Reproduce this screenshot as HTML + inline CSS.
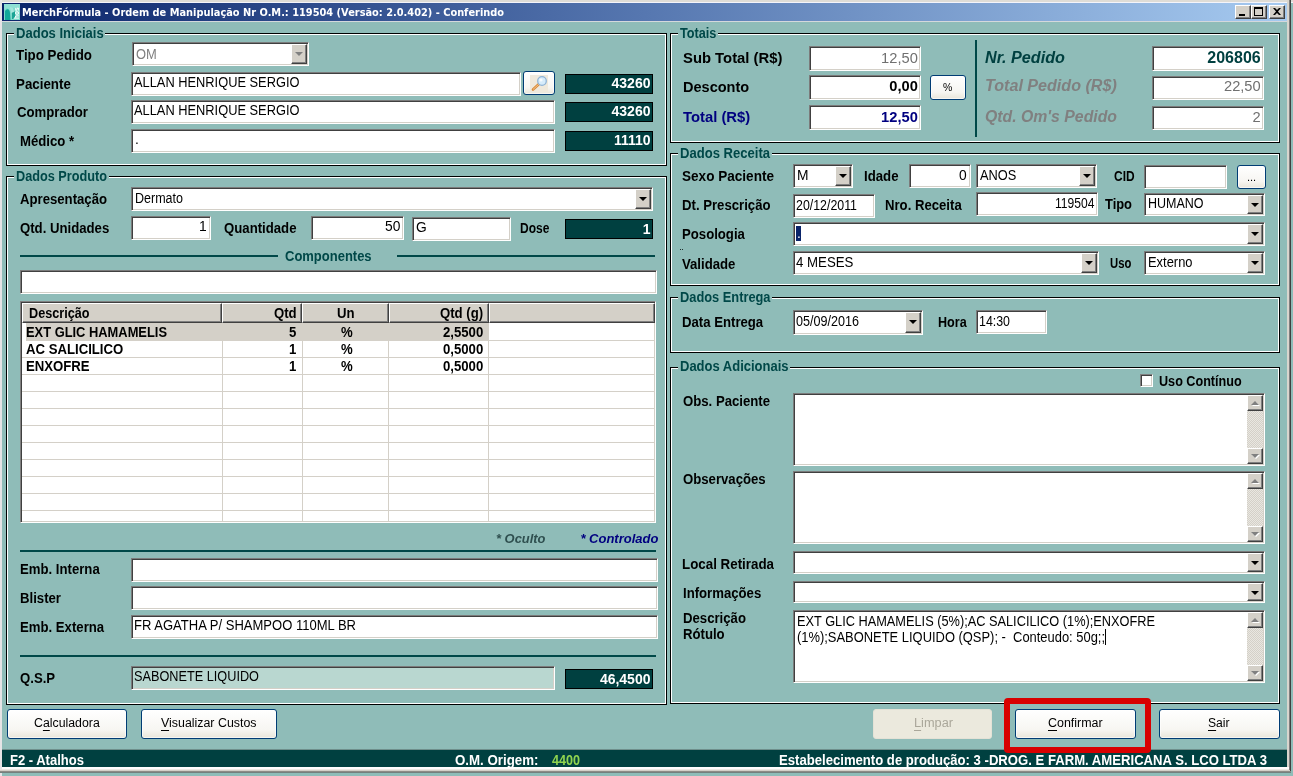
<!DOCTYPE html>
<html><head><meta charset="utf-8"><title>MerchFórmula - Ordem de Manipulação</title><style>
*{box-sizing:border-box;margin:0;padding:0}
html,body{width:1293px;height:776px;overflow:hidden;background:#8fbcb8;font-family:"Liberation Sans",sans-serif;}
body{position:relative}
#w{position:absolute;left:0;top:0;width:1293px;height:776px;will-change:transform;overflow:hidden}
.a{position:absolute}
.t{position:absolute;white-space:nowrap;transform-origin:0 0;line-height:16px;height:16px}
.b{font-weight:bold;font-size:14px;color:#000}
.r{font-size:13px;color:#000}
.fld{position:absolute;background:#fff;border:1px solid;border-color:#7b7b7b #fff #fff #7b7b7b;box-shadow:inset 1px 1px 0 #404040,inset -1px -1px 0 #d4d0c8}
.dd{position:absolute;top:1px;right:1px;bottom:1px;width:16px;background:#d4d0c8;border:1px solid;border-color:#fff #404040 #404040 #fff;box-shadow:inset -1px -1px 0 #808080}
.dd:after{content:"";position:absolute;left:3px;top:7px;border:4px solid transparent;border-top-color:#000;border-bottom:0;border-left-width:4px;border-right-width:4px}
.dd.dis:after{border-top-color:#808080}
.gb{position:absolute;border:1px solid #000;box-shadow:inset 0 0 0 1px #fff}
.lg{position:absolute;background:#8fbcb8;height:14px}
.dk{position:absolute;background:#004040;border:1px solid #000}
.hl{position:absolute;height:2px;background:#004848}
.xb{position:absolute;border:1px solid #003c74;border-radius:3px;background:linear-gradient(#ffffff 0%,#f7f6f2 70%,#e9e6da 100%);box-shadow:inset 0 0 0 1px rgba(255,255,255,.6)}
.xb.dis{border-color:#e4e2d6;background:#ebe9dd;box-shadow:none}
.sb{position:absolute;top:1px;right:1px;bottom:1px;width:16px;background-color:#e9e7e1;background-image:linear-gradient(45deg,#d4d0c8 25%,transparent 25%,transparent 75%,#d4d0c8 75%),linear-gradient(45deg,#d4d0c8 25%,transparent 25%,transparent 75%,#d4d0c8 75%);background-size:2px 2px;background-position:0 0,1px 1px}
.sbb{position:absolute;left:0;width:16px;height:16px;background:#d4d0c8;border:1px solid;border-color:#fff #404040 #404040 #fff;box-shadow:inset -1px -1px 0 #808080}
.sbb:after{content:"";position:absolute;left:3px;top:5px;border:4px solid transparent;filter:drop-shadow(1px 1px 0 #fff)}
.sbb.up:after{border-bottom:4px solid #808080;border-top:0}
.sbb.dn:after{border-top:4px solid #808080;border-bottom:0}
u{text-decoration:underline;text-underline-offset:3px;text-decoration-thickness:1px}
</style></head><body>
<div id="w">
<div class="a" style="left:0;top:0;width:1293px;height:3px;background:#dedcd6"></div>
<div class="a" style="left:0;top:2px;width:1293px;height:1px;background:#f4f4fa"></div>
<div class="a" style="left:0;top:0;width:2px;height:776px;background:#e6e4e6"></div>
<div class="a" style="left:2px;top:3px;width:1285px;height:18px;background:linear-gradient(90deg,#0a246a 0%,#5677b0 50%,#a6caf0 100%)"></div>
<div class="a" style="left:2px;top:21px;width:1285px;height:1px;background:#d4d8dc"></div>
<svg class="a" style="left:4px;top:4px" width="16" height="16" viewBox="0 0 16 16"><rect width="16" height="16" fill="#7fd9cb"/><path d="M0 0h16v5L9 4 6 6 3 4 0 6z" fill="#8fe0d4"/><path d="M1 7c2-3 5-2 5 2l.5 7H1z" fill="#12a89a"/><path d="M8 8l3-.5.5 4.500L9 15H8z" fill="#1aa394"/><path d="M6 3l3 1 1 4-3 1z" fill="#a5e6dc"/><text x="-15" y="15" transform="rotate(-90)" font-family="Liberation Sans,sans-serif" font-size="6.5" font-weight="bold" fill="#fff">hos</text></svg>
<span class="t" style="left:21.80px;top:5.09px;font-size:11px;transform:scaleX(0.8923);font-family:'DejaVu Sans','Liberation Sans',sans-serif;font-weight:bold;color:#fff">MerchFórmula - Ordem de Manipulação Nr O.M.: 119504 (Versão: 2.0.402) - Conferindo</span>
<div class="a" style="left:1235px;top:5px;width:16px;height:14px;background:#d4d0c8;border:1px solid;border-color:#fff #404040 #404040 #fff;box-shadow:inset -1px -1px 0 #808080"><div class="a" style="left:3px;top:8px;width:6px;height:2px;background:#000"></div></div>
<div class="a" style="left:1251px;top:5px;width:16px;height:14px;background:#d4d0c8;border:1px solid;border-color:#fff #404040 #404040 #fff;box-shadow:inset -1px -1px 0 #808080"><div class="a" style="left:2px;top:1px;width:9px;height:9px;border:1px solid #000;border-top-width:2px"></div></div>
<div class="a" style="left:1269px;top:5px;width:16px;height:14px;background:#d4d0c8;border:1px solid;border-color:#fff #404040 #404040 #fff;box-shadow:inset -1px -1px 0 #808080"><svg class="a" style="left:3px;top:2px" width="8" height="7" viewBox="0 0 8 7"><path d="M0 0h2l2 2 2-2h2L5 3.500 8 7H6L4 5 2 7H0l3-3.500z" fill="#000"/></svg></div>
<div class="a" style="left:1287px;top:0;width:2px;height:773px;background:#d8d5ce"></div>
<div class="a" style="left:1289px;top:0;width:1px;height:773px;background:#808080"></div>
<div class="a" style="left:1290px;top:0;width:1px;height:773px;background:#404040"></div>
<div class="a" style="left:2px;top:749px;width:1285px;height:1px;background:#6f8f8c"></div>
<div class="a" style="left:2px;top:750px;width:1285px;height:17px;background:#004040"></div>
<div class="a" style="left:2px;top:767px;width:1287px;height:2px;background:#fdfdfd"></div><div class="a" style="left:2px;top:769px;width:1287px;height:1px;background:#ebe9e4"></div>
<div class="a" style="left:0;top:770px;width:1290px;height:1px;background:#d4d0c8"></div><div class="a" style="left:0;top:771px;width:1291px;height:1px;background:#8d8b86"></div>
<div class="a" style="left:0;top:772px;width:1291px;height:1px;background:#74807e"></div>
<div class="gb" style="left:6px;top:33px;width:661px;height:133px;"></div>
<div class="lg" style="left:13.8px;top:27px;width:91.7px;height:14px;"></div>
<span class="t b" style="left:15.80px;top:24.75px;font-size:14px;transform:scaleX(0.9314);color:#004848">Dados Iniciais</span>
<div class="gb" style="left:6px;top:176px;width:661px;height:529px;"></div>
<div class="lg" style="left:14px;top:170px;width:95px;height:14px;"></div>
<span class="t b" style="left:16.00px;top:167.95px;font-size:14px;transform:scaleX(0.9069);color:#004848">Dados Produto</span>
<div class="gb" style="left:670px;top:33px;width:609.5px;height:110px;"></div>
<div class="lg" style="left:677.6px;top:27px;width:40.39999999999998px;height:14px;"></div>
<span class="t b" style="left:679.60px;top:24.75px;font-size:14px;transform:scaleX(0.9054);color:#004848">Totais</span>
<div class="gb" style="left:670px;top:153px;width:609.5px;height:133px;"></div>
<div class="lg" style="left:677.5px;top:147px;width:94.0px;height:14px;"></div>
<span class="t b" style="left:679.50px;top:144.85px;font-size:14px;transform:scaleX(0.9328);color:#004848">Dados Receita</span>
<div class="gb" style="left:670px;top:297px;width:609.5px;height:56px;"></div>
<div class="lg" style="left:677.5px;top:291px;width:94.5px;height:14px;"></div>
<span class="t b" style="left:679.50px;top:288.95px;font-size:14px;transform:scaleX(0.9159);color:#004848">Dados Entrega</span>
<div class="gb" style="left:670px;top:366.5px;width:609.5px;height:337.5px;"></div>
<div class="lg" style="left:677.5px;top:360.5px;width:112.5px;height:14.0px;"></div>
<span class="t b" style="left:679.50px;top:358.25px;font-size:14px;transform:scaleX(0.9277);color:#004848">Dados Adicionais</span>
<span class="t b" style="left:16.20px;top:46.65px;font-size:14px;transform:scaleX(0.9517);">Tipo Pedido</span>
<span class="t b" style="left:16.20px;top:76.15px;font-size:14px;transform:scaleX(0.9515);">Paciente</span>
<span class="t b" style="left:16.70px;top:104.15px;font-size:14px;transform:scaleX(0.9400);">Comprador</span>
<span class="t b" style="left:19.50px;top:133.15px;font-size:14px;transform:scaleX(0.9400);">Médico *</span>
<div class="fld" style="left:132px;top:42px;width:177px;height:24px;"><div class="dd dis"></div></div>
<span class="t r" style="left:135.60px;top:45.85px;font-size:14px;transform:scaleX(0.9219);color:#808080">OM</span>
<div class="fld" style="left:131px;top:72px;width:390px;height:24px;"></div>
<span class="t r" style="left:134.00px;top:74.25px;font-size:14px;transform:scaleX(0.9169);">ALLAN HENRIQUE SERGIO</span>
<div class="fld" style="left:131px;top:100px;width:424px;height:24px;"></div>
<span class="t r" style="left:134.00px;top:102.25px;font-size:14px;transform:scaleX(0.9169);">ALLAN HENRIQUE SERGIO</span>
<div class="fld" style="left:131px;top:129px;width:424px;height:24px;"></div>
<span class="t r" style="left:135.00px;top:131.45px;font-size:14px;transform:scaleX(0.9850);">.</span>
<div class="xb" style="left:523px;top:71px;width:32px;height:24px;"><svg class="a" style="left:6px;top:3px" width="20" height="17" viewBox="0 0 20 17"><rect x="0" y="0" width="18" height="17" fill="#efe9dc"/><path d="M3 14.500L9.500 8.500" stroke="#d98a3a" stroke-width="2.600" stroke-linecap="round"/><path d="M3.300 14.200L9 9" stroke="#f4c58a" stroke-width="1" stroke-linecap="round"/><circle cx="12" cy="6" r="4.300" fill="#d6ecfb" stroke="#8fb4d6" stroke-width="1.300"/><circle cx="11" cy="5" r="1.600" fill="#fff" opacity=".8"/></svg></div>
<div class="dk" style="left:565px;top:74px;width:88px;height:20px;"></div>
<span class="t b" style="left:611.56px;top:75.15px;font-size:14px;color:#fff">43260</span>
<div class="dk" style="left:565px;top:102px;width:88px;height:20px;"></div>
<span class="t b" style="left:611.56px;top:103.15px;font-size:14px;color:#fff">43260</span>
<div class="dk" style="left:565px;top:131px;width:88px;height:20px;"></div>
<span class="t b" style="left:613.88px;top:132.15px;font-size:14px;color:#fff">11110</span>
<span class="t b" style="left:19.50px;top:190.65px;font-size:14px;transform:scaleX(0.9400);">Apresentação</span>
<div class="fld" style="left:131px;top:187px;width:522px;height:24px;"><div class="dd"></div></div>
<span class="t r" style="left:135.00px;top:190.15px;font-size:14px;transform:scaleX(0.8941);">Dermato</span>
<span class="t b" style="left:19.50px;top:219.65px;font-size:14px;transform:scaleX(0.9400);">Qtd. Unidades</span>
<div class="fld" style="left:131px;top:216px;width:80px;height:24px;"></div>
<span class="t r" style="left:199.32px;top:217.65px;font-size:14px;transform:scaleX(0.9850);">1</span>
<span class="t b" style="left:223.50px;top:219.65px;font-size:14px;transform:scaleX(0.9414);">Quantidade</span>
<div class="fld" style="left:311px;top:216px;width:93px;height:24px;"></div>
<span class="t r" style="left:384.66px;top:217.65px;font-size:14px;transform:scaleX(0.9850);">50</span>
<div class="fld" style="left:412px;top:217px;width:99px;height:24px;"></div>
<span class="t r" style="left:415.50px;top:219.15px;font-size:14px;transform:scaleX(0.9850);">G</span>
<span class="t b" style="left:519.70px;top:219.65px;font-size:14px;transform:scaleX(0.8559);">Dose</span>
<div class="dk" style="left:565px;top:219px;width:88px;height:20px;"></div>
<span class="t b" style="left:642.70px;top:220.65px;font-size:14px;color:#fff">1</span>
<div class="hl" style="left:20px;top:255px;width:258px;height:2px;"></div>
<span class="t b" style="left:285.40px;top:247.65px;font-size:14px;transform:scaleX(0.9278);color:#004848">Componentes</span>
<div class="hl" style="left:397px;top:255px;width:258px;height:2px;"></div>
<div class="fld" style="left:20px;top:270px;width:637px;height:24px;"></div>
<div class="a" style="left:20px;top:301px;width:636px;height:222px;background:#fff;border:1px solid;border-color:#808080 #fff #fff #808080;box-shadow:inset 1px 1px 0 #404040,inset -1px -1px 0 #d4d0c8"></div>
<div class="a" style="left:22px;top:303px;width:200px;height:20px;background:#d4d0c8;border:1px solid;border-color:#fff #404040 #404040 #fff;box-shadow:inset -1px -1px 0 #808080"></div>
<div class="a" style="left:222px;top:303px;width:80px;height:20px;background:#d4d0c8;border:1px solid;border-color:#fff #404040 #404040 #fff;box-shadow:inset -1px -1px 0 #808080"></div>
<div class="a" style="left:302px;top:303px;width:86.5px;height:20px;background:#d4d0c8;border:1px solid;border-color:#fff #404040 #404040 #fff;box-shadow:inset -1px -1px 0 #808080"></div>
<div class="a" style="left:388.5px;top:303px;width:100.0px;height:20px;background:#d4d0c8;border:1px solid;border-color:#fff #404040 #404040 #fff;box-shadow:inset -1px -1px 0 #808080"></div>
<div class="a" style="left:488.5px;top:303px;width:166.5px;height:20px;background:#d4d0c8;border:1px solid;border-color:#fff #404040 #404040 #fff;box-shadow:inset -1px -1px 0 #808080"></div>
<div class="a" style="left:26px;top:323px;width:462.500px;height:18px;background:#d4d0c8"></div>
<div class="a" style="left:488.500px;top:340px;width:166.500px;height:1px;background:#d4d0c8"></div>
<div class="a" style="left:22px;top:357px;width:633px;height:1px;background:#d4d0c8"></div>
<div class="a" style="left:22px;top:374px;width:633px;height:1px;background:#d4d0c8"></div>
<div class="a" style="left:22px;top:391px;width:633px;height:1px;background:#d4d0c8"></div>
<div class="a" style="left:22px;top:408px;width:633px;height:1px;background:#d4d0c8"></div>
<div class="a" style="left:22px;top:425px;width:633px;height:1px;background:#d4d0c8"></div>
<div class="a" style="left:22px;top:442px;width:633px;height:1px;background:#d4d0c8"></div>
<div class="a" style="left:22px;top:459px;width:633px;height:1px;background:#d4d0c8"></div>
<div class="a" style="left:22px;top:476px;width:633px;height:1px;background:#d4d0c8"></div>
<div class="a" style="left:22px;top:493px;width:633px;height:1px;background:#d4d0c8"></div>
<div class="a" style="left:22px;top:510px;width:633px;height:1px;background:#d4d0c8"></div>
<div class="a" style="left:221.5px;top:341px;width:1px;height:180px;background:#d4d0c8"></div>
<div class="a" style="left:301.5px;top:341px;width:1px;height:180px;background:#d4d0c8"></div>
<div class="a" style="left:388.0px;top:341px;width:1px;height:180px;background:#d4d0c8"></div>
<div class="a" style="left:488.0px;top:341px;width:1px;height:180px;background:#d4d0c8"></div>
<span class="t b" style="left:28.60px;top:305.15px;font-size:14px;transform:scaleX(0.9038);">Descrição</span>
<span class="t b" style="left:273.84px;top:305.15px;font-size:14px;transform:scaleX(0.9400);">Qtd</span>
<span class="t b" style="left:337.00px;top:305.15px;font-size:14px;transform:scaleX(0.9400);">Un</span>
<span class="t b" style="left:439.88px;top:305.15px;font-size:14px;transform:scaleX(0.9400);">Qtd (g)</span>
<span class="t b" style="left:26.40px;top:323.95px;font-size:14px;transform:scaleX(0.9202);">EXT GLIC HAMAMELIS</span>
<span class="t b" style="left:288.67px;top:323.95px;font-size:14px;transform:scaleX(0.9400);">5</span>
<span class="t b" style="left:340.50px;top:323.95px;font-size:14px;transform:scaleX(0.9400);">%</span>
<span class="t b" style="left:442.74px;top:323.95px;font-size:14px;transform:scaleX(0.9400);">2,5500</span>
<span class="t b" style="left:26.40px;top:340.95px;font-size:14px;transform:scaleX(0.9400);">AC SALICILICO</span>
<span class="t b" style="left:288.67px;top:340.95px;font-size:14px;transform:scaleX(0.9400);">1</span>
<span class="t b" style="left:340.50px;top:340.95px;font-size:14px;transform:scaleX(0.9400);">%</span>
<span class="t b" style="left:442.74px;top:340.95px;font-size:14px;transform:scaleX(0.9400);">0,5000</span>
<span class="t b" style="left:26.40px;top:357.95px;font-size:14px;transform:scaleX(0.9400);">ENXOFRE</span>
<span class="t b" style="left:288.67px;top:357.95px;font-size:14px;transform:scaleX(0.9400);">1</span>
<span class="t b" style="left:340.50px;top:357.95px;font-size:14px;transform:scaleX(0.9400);">%</span>
<span class="t b" style="left:442.74px;top:357.95px;font-size:14px;transform:scaleX(0.9400);">0,5000</span>
<span class="t b" style="left:495.50px;top:530.80px;font-size:13px;transform:scaleX(0.9931);font-style:italic;color:#2f4f4f">* Oculto</span>
<span class="t b" style="left:580.40px;top:530.80px;font-size:13px;font-style:italic;color:#000080">* Controlado</span>
<div class="hl" style="left:20px;top:550px;width:636px;height:2px;"></div>
<span class="t b" style="left:19.70px;top:561.15px;font-size:14px;transform:scaleX(0.9399);">Emb. Interna</span>
<div class="fld" style="left:131px;top:558px;width:527px;height:24px;"></div>
<span class="t b" style="left:19.70px;top:590.15px;font-size:14px;transform:scaleX(0.9400);">Blister</span>
<div class="fld" style="left:131px;top:586px;width:527px;height:24px;"></div>
<span class="t b" style="left:19.70px;top:619.15px;font-size:14px;transform:scaleX(0.9400);">Emb. Externa</span>
<div class="fld" style="left:131px;top:615px;width:527px;height:24px;"></div>
<span class="t r" style="left:134.20px;top:617.15px;font-size:14px;transform:scaleX(0.9305);">FR AGATHA P/ SHAMPOO 110ML BR</span>
<div class="hl" style="left:20px;top:655px;width:636px;height:2px;"></div>
<span class="t b" style="left:19.70px;top:670.15px;font-size:14px;transform:scaleX(0.9400);">Q.S.P</span>
<div class="fld" style="left:131px;top:666px;width:424px;height:24px;background:#b9d7d0"></div>
<span class="t r" style="left:134.20px;top:668.15px;font-size:14px;transform:scaleX(0.9077);">SABONETE LIQUIDO</span>
<div class="dk" style="left:565px;top:669px;width:88px;height:20px;"></div>
<span class="t b" style="left:599.89px;top:670.65px;font-size:14px;color:#fff">46,4500</span>
<span class="t" style="left:682.80px;top:50.12px;font-size:14.67px;transform:scaleX(1.0117);font-weight:bold;color:#000">Sub Total (R$)</span>
<span class="t" style="left:682.80px;top:78.92px;font-size:14.67px;transform:scaleX(0.9913);font-weight:bold;color:#000">Desconto</span>
<span class="t" style="left:682.80px;top:109.02px;font-size:14.67px;transform:scaleX(1.0105);font-weight:bold;color:#000080">Total (R$)</span>
<div class="fld" style="left:809px;top:46px;width:112px;height:24.5px;"></div>
<div class="fld" style="left:809px;top:75px;width:112px;height:25px;"></div>
<div class="fld" style="left:809px;top:105px;width:112px;height:25px;"></div>
<span class="t" style="left:881.11px;top:49.82px;font-size:14.67px;color:#707070">12,50</span>
<span class="t" style="left:889.27px;top:78.32px;font-size:14.67px;font-weight:bold;color:#000">0,00</span>
<span class="t" style="left:881.11px;top:108.52px;font-size:14.67px;font-weight:bold;color:#000080">12,50</span>
<div class="xb" style="left:930px;top:75px;width:36px;height:25px;"></div>
<span class="t r" style="left:942.70px;top:79.42px;font-size:11.5px;transform:scaleX(0.9087);">%</span>
<div class="a" style="left:975px;top:40px;width:2px;height:97px;background:#004848"></div>
<span class="t" style="left:985.00px;top:49.96px;font-size:16px;transform:scaleX(1.0111);font-weight:bold;font-style:italic;color:#004040">Nr. Pedido</span>
<span class="t" style="left:985.00px;top:78.46px;font-size:16px;transform:scaleX(1.0063);font-weight:bold;font-style:italic;color:#808080">Total Pedido (R$)</span>
<span class="t" style="left:985.00px;top:108.76px;font-size:16px;transform:scaleX(0.9881);font-weight:bold;font-style:italic;color:#808080">Qtd. Om's Pedido</span>
<div class="fld" style="left:1152px;top:46px;width:112px;height:24.5px;"></div>
<div class="fld" style="left:1152px;top:75.5px;width:112px;height:24.5px;"></div>
<div class="fld" style="left:1152px;top:105.5px;width:112px;height:24.5px;"></div>
<span class="t" style="left:1207.31px;top:49.96px;font-size:16px;font-weight:bold;color:#004040">206806</span>
<span class="t" style="left:1224.01px;top:78.22px;font-size:14.67px;color:#707070">22,50</span>
<span class="t" style="left:1252.54px;top:109.22px;font-size:14.67px;color:#707070">2</span>
<span class="t b" style="left:682.30px;top:168.15px;font-size:14px;transform:scaleX(0.9691);">Sexo Paciente</span>
<div class="fld" style="left:793px;top:164px;width:60px;height:24px;"><div class="dd"></div></div>
<span class="t r" style="left:796.50px;top:166.65px;font-size:14px;transform:scaleX(0.9850);">M</span>
<span class="t b" style="left:863.50px;top:168.15px;font-size:14px;transform:scaleX(0.9432);">Idade</span>
<div class="fld" style="left:909px;top:164px;width:62px;height:24px;"></div>
<span class="t r" style="left:959.32px;top:166.65px;font-size:14px;transform:scaleX(0.9850);">0</span>
<div class="fld" style="left:976px;top:164px;width:121px;height:24px;"><div class="dd"></div></div>
<span class="t r" style="left:979.80px;top:166.65px;font-size:14px;transform:scaleX(0.9146);">ANOS</span>
<span class="t b" style="left:1113.60px;top:167.55px;font-size:14px;transform:scaleX(0.8539);">CID</span>
<div class="fld" style="left:1144px;top:165px;width:83px;height:24px;"></div>
<div class="xb" style="left:1237px;top:165px;width:29px;height:24px;"></div>
<span class="t r" style="left:1247.00px;top:169.19px;font-size:11px;">...</span>
<span class="t b" style="left:682.30px;top:197.15px;font-size:14px;transform:scaleX(0.9400);">Dt. Prescrição</span>
<div class="fld" style="left:793px;top:194px;width:82px;height:24px;"></div>
<span class="t r" style="left:795.50px;top:196.65px;font-size:14px;transform:scaleX(0.8837);">20/12/2011</span>
<span class="t b" style="left:884.80px;top:197.15px;font-size:14px;transform:scaleX(0.9388);">Nro. Receita</span>
<div class="fld" style="left:976px;top:192px;width:122px;height:24px;"></div>
<span class="t r" style="left:1054.60px;top:194.65px;font-size:14px;transform:scaleX(0.8624);">119504</span>
<span class="t b" style="left:1105.00px;top:196.35px;font-size:14px;transform:scaleX(0.9216);">Tipo</span>
<div class="fld" style="left:1144px;top:193px;width:121px;height:23px;"><div class="dd"></div></div>
<span class="t r" style="left:1148.40px;top:195.45px;font-size:14px;transform:scaleX(0.8934);">HUMANO</span>
<span class="t b" style="left:682.30px;top:226.15px;font-size:14px;transform:scaleX(0.9400);">Posologia</span>
<div class="fld" style="left:793px;top:222px;width:472px;height:24px;"><div class="dd"></div></div>
<div class="a" style="left:796px;top:225.500px;width:5px;height:15px;background:#0a246a"></div>
<span class="t r" style="left:797.00px;top:225.15px;font-size:14px;transform:scaleX(0.9850);color:#fff">.</span>
<div class="a" style="left:680px;top:249px;width:1px;height:1px;background:#20302f"></div><div class="a" style="left:682px;top:249px;width:1px;height:1px;background:#20302f"></div>
<span class="t b" style="left:682.30px;top:255.85px;font-size:14px;transform:scaleX(0.9400);">Validade</span>
<div class="fld" style="left:793px;top:251px;width:306px;height:24px;"><div class="dd"></div></div>
<span class="t r" style="left:795.60px;top:253.85px;font-size:14px;transform:scaleX(0.9456);">4 MESES</span>
<span class="t b" style="left:1109.70px;top:255.25px;font-size:14px;transform:scaleX(0.8052);">Uso</span>
<div class="fld" style="left:1144px;top:251px;width:121px;height:23.5px;"><div class="dd"></div></div>
<span class="t r" style="left:1148.40px;top:254.15px;font-size:14px;transform:scaleX(0.9223);">Externo</span>
<span class="t b" style="left:682.30px;top:314.15px;font-size:14px;transform:scaleX(0.9400);">Data Entrega</span>
<div class="fld" style="left:793px;top:310px;width:130px;height:24.5px;"><div class="dd"></div></div>
<span class="t r" style="left:796.00px;top:313.45px;font-size:14px;transform:scaleX(0.8990);">05/09/2016</span>
<span class="t b" style="left:937.70px;top:314.15px;font-size:14px;transform:scaleX(0.8995);">Hora</span>
<div class="fld" style="left:976px;top:310px;width:71px;height:24px;"></div>
<span class="t r" style="left:979.30px;top:312.65px;font-size:14px;transform:scaleX(0.8845);">14:30</span>
<div class="a" style="left:1140px;top:374px;width:13px;height:13px;background:#fff;border:1px solid;border-color:#808080 #fff #fff #808080;box-shadow:inset 1px 1px 0 #404040,inset -1px -1px 0 #d4d0c8"></div>
<span class="t b" style="left:1158.70px;top:372.75px;font-size:14px;transform:scaleX(0.9012);">Uso Contínuo</span>
<span class="t b" style="left:682.50px;top:392.65px;font-size:14px;transform:scaleX(0.9400);">Obs. Paciente</span>
<div class="fld" style="left:793px;top:393px;width:472px;height:73px;"><div class="sb"><div class="sbb up" style="top:0"></div><div class="sbb dn" style="bottom:0"></div></div></div>
<span class="t b" style="left:682.50px;top:470.65px;font-size:14px;transform:scaleX(0.9400);">Observações</span>
<div class="fld" style="left:793px;top:471px;width:472px;height:73px;"><div class="sb"><div class="sbb up" style="top:0"></div><div class="sbb dn" style="bottom:0"></div></div></div>
<span class="t b" style="left:682.30px;top:555.75px;font-size:14px;transform:scaleX(0.9535);">Local Retirada</span>
<div class="fld" style="left:793px;top:551px;width:472px;height:22.5px;"><div class="dd"></div></div>
<span class="t b" style="left:682.50px;top:584.65px;font-size:14px;transform:scaleX(0.9400);">Informações</span>
<div class="fld" style="left:793px;top:580.5px;width:472px;height:22.5px;"><div class="dd"></div></div>
<span class="t b" style="left:682.50px;top:609.85px;font-size:14px;transform:scaleX(0.9400);">Descrição</span>
<span class="t b" style="left:682.50px;top:625.95px;font-size:14px;transform:scaleX(0.9400);">Rótulo</span>
<div class="fld" style="left:793px;top:610px;width:472px;height:73px;"><div class="sb"><div class="sbb up" style="top:0"></div><div class="sbb dn" style="bottom:0"></div></div></div>
<span class="t r" style="left:796.50px;top:613.15px;font-size:14px;transform:scaleX(0.9118);">EXT GLIC HAMAMELIS (5%);AC SALICILICO (1%);ENXOFRE</span>
<span class="t r" style="left:796.50px;top:629.15px;font-size:14px;transform:scaleX(0.9228);white-space:pre">(1%);SABONETE LIQUIDO (QSP); -  Conteudo: 50g;;</span>
<div class="a" style="left:1105px;top:629px;width:1px;height:16px;background:#000"></div>
<div class="xb" style="left:6.5px;top:709px;width:120.5px;height:29.5px;"></div>
<span class="t r" style="left:33.60px;top:715.34px;font-size:12.3px;transform:scaleX(1.0024);">C<u>a</u>lculadora</span>
<div class="xb" style="left:141px;top:709px;width:136px;height:29.5px;"></div>
<span class="t r" style="left:160.80px;top:715.34px;font-size:12.3px;transform:scaleX(1.0076);"><u>V</u>isualizar Custos</span>
<div class="xb dis" style="left:873px;top:709px;width:119px;height:29.5px;"></div>
<span class="t r" style="left:914.30px;top:715.34px;font-size:12.3px;transform:scaleX(1.0374);color:#aaa79a"><u>L</u>impar</span>
<div class="xb" style="left:1015px;top:709px;width:121px;height:29.5px;"></div>
<span class="t r" style="left:1048.30px;top:715.34px;font-size:12.3px;transform:scaleX(1.0130);"><u>C</u>onfirmar</span>
<div class="xb" style="left:1159px;top:709px;width:121px;height:29.5px;"></div>
<span class="t r" style="left:1208.40px;top:715.34px;font-size:12.3px;transform:scaleX(0.9874);"><u>S</u>air</span>
<div class="a" style="left:1004px;top:698px;width:147px;height:55px;border:6px solid #d80000;border-radius:4px"></div>
<span class="t b" style="left:9.50px;top:751.95px;font-size:14px;transform:scaleX(0.9283);color:#fff">F2 - Atalhos</span>
<span class="t b" style="left:454.50px;top:752.15px;font-size:14px;transform:scaleX(0.9499);color:#fff">O.M. Origem:</span>
<span class="t b" style="left:551.50px;top:752.15px;font-size:14px;transform:scaleX(0.8987);color:#8fd44f">4400</span>
<span class="t b" style="left:778.70px;top:752.15px;font-size:14px;transform:scaleX(0.9368);color:#fff">Estabelecimento de produção: 3 -DROG. E FARM. AMERICANA S. LCO LTDA 3</span>
</div>
</body></html>
